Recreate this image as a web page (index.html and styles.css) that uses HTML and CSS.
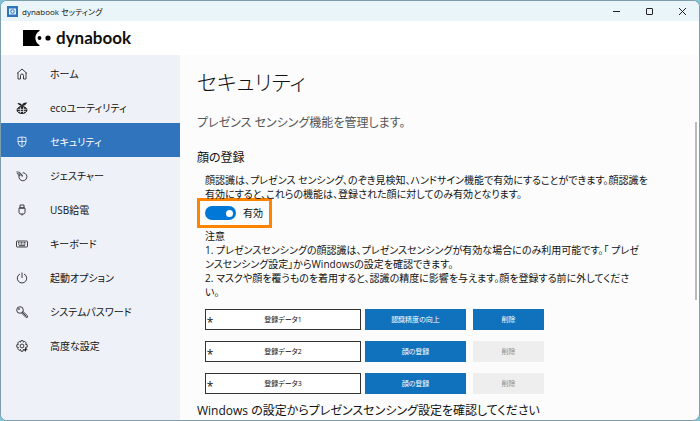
FILE: index.html
```html
<!DOCTYPE html>
<html lang="ja">
<head>
    <meta charset="UTF-8">
    <meta name="viewport" content="width=device-width, initial-scale=1.0">
    <title>dynabook セッティング</title>
    <link rel="stylesheet" href="styles.css">
</head>
<body>
    <div class="window">
        <div class="titlebar">
            <svg class="app-icon" viewBox="0 0 11 11"><rect width="11" height="11" fill="#2f74bd"/><rect x="2" y="2.5" width="7" height="6" fill="#dcebf8"/><circle cx="5.500" cy="5.500" r="1.800" fill="none" stroke="#2f74bd"/></svg>
            <span class="app-name">dynabook セッティング</span>
            <div class="window-buttons">
                <button type="button" aria-label="最小化"><svg viewBox="0 0 9 9"><path d="M1 4.500h7"/></svg></button>
                <button type="button" aria-label="最大化"><svg viewBox="0 0 9 9"><rect x="1.500" y="1.500" width="6" height="6" rx="0.500"/></svg></button>
                <button type="button" aria-label="閉じる"><svg viewBox="0 0 9 9"><path d="M1 1l7 7M8 1l-7 7"/></svg></button>
            </div>
        </div>
        <header class="brand">
            <svg class="brand-mark" viewBox="0 0 28 16"><path d="M0 0h16.500v1A8 8 0 0 0 16.500 15v1H0z"/><circle cx="16.500" cy="8" r="1.900"/><circle cx="25" cy="8" r="2.600"/></svg>
            <span class="brand-name">dynabook</span>
        </header>
        <div class="body">
            <nav class="sidebar">
                <a href="#"><svg viewBox="0 0 12 12"><path d="M1 5.500L6 1l5 4.500M2 4.800V11h2.500V7.500a1.500 1.500 0 0 1 3 0V11H10V4.800"/></svg>ホーム</a>
                <a href="#"><svg viewBox="0 0 12 12"><ellipse cx="6" cy="8" rx="5" ry="3.600" fill="#222"/><path d="M6 4C4 3.800 2.200 2.800 1.500 1C3.500 .8 5.300 1.600 6 3C7 1.200 8.500 .4 11 .6C10.300 2.800 8.500 4 6 4z" fill="#222" stroke="none"/><path d="M1.500 7.300h9M2 9.400h8M4.400 5.200v5.800M7.600 5.200v5.800" stroke="#eef2f8" stroke-width=".8"/></svg>ecoユーティリティ</a>
                <a href="#" class="active"><svg viewBox="0 0 12 12"><path d="M2 1.500Q6 .5 10 1.500V6Q10 9.500 6 11Q2 9.500 2 6zM6 1v10M2 5.500h8"/></svg>セキュリティ</a>
                <a href="#"><svg viewBox="0 0 12 12"><path d="M3.600 4.500A4 4 0 1 0 7.500 2.800M.8 1.200L5.800 6.200Q6.800 6.600 6.400 5.400L2.800 1.600M.8 2.800l2.800 3.400M6.500 3l1-.3"/></svg>ジェスチャー</a>
                <a href="#"><svg viewBox="0 0 12 12"><path d="M4 1h4v3H4zM3 4h6v4.500L8 10H4L3 8.500zM6 10v1.500"/></svg>USB給電</a>
                <a href="#"><svg viewBox="0 0 12 12"><rect x=".5" y="3" width="11" height="6" rx=".7"/><path d="M2 4.600h8M2 6.100h8" stroke-dasharray="1 .5"/><path d="M3 7.700h6"/></svg>キーボード</a>
                <a href="#"><svg viewBox="0 0 12 12"><path d="M6 .5v5.500M4 2a4.700 4.700 0 1 0 4 0"/></svg>起動オプション</a>
                <a href="#"><svg viewBox="0 0 12 12"><circle cx="4" cy="4" r="3.300"/><circle cx="3" cy="3" r=".5"/><path d="M5.500 7l4.300 4.300h1.600V9.700L7 5.500M6.300 6.300l4 4"/></svg>システムパスワード</a>
                <a href="#"><svg viewBox="0 0 12 12"><path d="M4.900.7h2.200l.3 1.500 1.300-.8 1.600 1.600-.8 1.300 1.700.4v2.400l-1.700.3.8 1.400-1.600 1.600-1.300-.9-.3 1.700H4.900l-.4-1.700-1.300.9-1.600-1.600.9-1.400-1.700-.3V4.700l1.700-.4-.9-1.300 1.600-1.600 1.300.8z"/><circle cx="6" cy="6" r="1.900"/><path d="M9.500 8v3.500M7.800 9.700h3.600"/></svg>高度な設定</a>
            </nav>
            <main class="content">
                <h1>セキュリティ</h1>
                <p class="lead">プレゼンス センシング機能を管理します。</p>
                <h2>顔の登録</h2>
                <section class="face">
                    <p>顔認識は、プレゼンス センシング、のぞき見検知、ハンドサイン機能で有効にすることができます。顔認識を<br>有効にすると、これらの機能は、登録された顔に対してのみ有効となります。</p>
                    <label class="toggle"><input type="checkbox" role="switch" checked>有効</label>
                    <p>注意<br>1. プレゼンスセンシングの顔認識は、プレゼンスセンシングが有効な場合にのみ利用可能です。「 プレゼ<br>ンスセンシング設定」からWindowsの設定を確認できます。<br>2. マスクや顔を覆うものを着用すると、認識の精度に影響を与えます。顔を登録する前に外してくださ<br>い。</p>
                    <div class="faces">
                        <div class="field"><label for="face1">*</label><input type="text" id="face1" value="登録データ1"></div>
                        <button type="button">認識精度の向上</button>
                        <button type="button" class="delete">削除</button>
                        <div class="field"><label for="face2">*</label><input type="text" id="face2" value="登録データ2"></div>
                        <button type="button">顔の登録</button>
                        <button type="button" class="delete" disabled>削除</button>
                        <div class="field"><label for="face3">*</label><input type="text" id="face3" value="登録データ3"></div>
                        <button type="button">顔の登録</button>
                        <button type="button" class="delete" disabled>削除</button>
                    </div>
                </section>
                <h2>Windows の設定からプレゼンスセンシング設定を確認してください</h2>
                <div class="scroll-thumb"></div>
            </main>
        </div>
    </div>
</body>
</html>
```
FILE: styles.css
```css
* {
    box-sizing: border-box;
}

body {
    margin: 0;
    background: #7fc4d6;
    color: #111;
    font-family: "Open Sans", "Noto Sans CJK JP", sans-serif;
    font-size: 10px;
    font-feature-settings: "palt";
}

button,
input {
    font: inherit;
    font-feature-settings: inherit;
    color: inherit;
}

h1,
h2,
p {
    margin: 0;
    font-weight: normal;
}

.window {
    display: flex;
    flex-direction: column;
    height: 100vh;
    border: 1px solid #7c9fab;
    border-radius: 7px;
    background: #fcfcfc;
    overflow: hidden;
}

.titlebar {
    display: flex;
    align-items: center;
    height: 20px;
    padding-left: 6px;
    background: #e9f5f8;
}

.app-icon {
    width: 11px;
    height: 11px;
    margin-right: 4px;
}

.app-name {
    font-size: 8px;
}

.window-buttons {
    display: flex;
    margin-left: auto;
}

.window-buttons button {
    display: flex;
    justify-content: center;
    width: 33px;
    padding: 0;
    border: none;
    background: none;
}

.window-buttons svg {
    width: 9px;
    height: 9px;
    fill: none;
    stroke: #222;
}

.brand {
    display: flex;
    align-items: center;
    gap: 5px;
    height: 34px;
    padding-left: 22px;
    background: #fff;
}

.brand-mark {
    width: 28px;
    height: 16px;
}

.brand-name {
    font-family: Lato, sans-serif;
    font-size: 17px;
    font-weight: bold;
    line-height: 20px;
    color: #111;
}

.body {
    display: flex;
    flex: 1;
    min-height: 0;
}

.sidebar {
    flex: none;
    width: 179px;
    background: #eef2f8;
}

.sidebar a {
    display: flex;
    align-items: center;
    gap: 22px;
    height: 34px;
    padding: 3px 0 0 15px;
    color: inherit;
    text-decoration: none;
}

.sidebar a.active {
    background: #2f74bd;
    color: #fff;
}

.sidebar svg {
    width: 12px;
    height: 12px;
    fill: none;
    stroke: currentColor;
    stroke-width: 0.8;
}

.content {
    position: relative;
    flex: 1;
    padding: 10px 17px 0;
    overflow: hidden;
}

h1 {
    font-size: 21px;
    font-weight: 300;
    line-height: 34px;
}

.lead {
    margin: 12px 0;
    font-size: 12px;
    line-height: 24px;
    color: #555;
}

h2 {
    font-size: 12px;
    line-height: 22px;
}

.face {
    padding: 4px 0 6px 8px;
    line-height: 14px;
}

.face p {
    white-space: nowrap;
}

.toggle {
    display: flex;
    align-items: center;
    gap: 7px;
    width: 75px;
    height: 30px;
    margin: -3px 0 1px -8px;
    padding-left: 5px;
    border: 3px solid #ff8400;
}

.toggle input {
    appearance: none;
    display: flex;
    align-items: center;
    justify-content: flex-end;
    width: 31px;
    height: 14px;
    margin: 0;
    padding-right: 3px;
    border-radius: 7px;
    background: #0078d7;
}

.toggle input::before {
    content: "";
    width: 7px;
    height: 7px;
    border-radius: 50%;
    background: #fff;
}

.faces {
    display: grid;
    grid-template-columns: 156px 101px 71px;
    gap: 11px 4px;
    margin-top: 10px;
    font-size: 7px;
}

.field {
    display: flex;
    align-items: center;
    height: 21px;
    border: 1px solid #333;
    background: #fff;
}

.field label {
    width: 8px;
    padding-top: 6px;
    font-size: 12px;
    text-align: center;
}

.field input {
    flex: 1;
    min-width: 0;
    padding: 0 8px 0 0;
    border: none;
    background: none;
    text-align: center;
}

.faces button {
    height: 21px;
    padding: 0;
    border: none;
    background: #1072bd;
    color: #fff;
}

.faces .delete {
    width: 71px;
    margin-left: 3px;
}

.faces button:disabled {
    background: #eee;
    color: #888;
}

.scroll-thumb {
    position: absolute;
    top: 67px;
    right: 2px;
    width: 2px;
    height: 178px;
    background: #bbb;
}
```
